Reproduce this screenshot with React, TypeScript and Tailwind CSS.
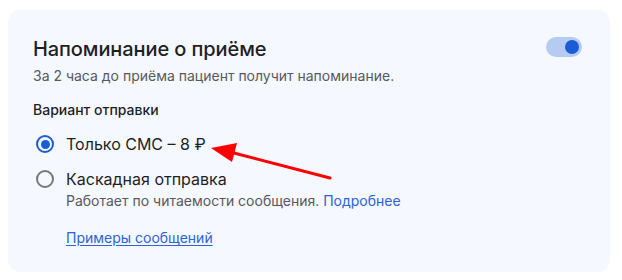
export default function App() {
  return (
    <div className="w-[622px] h-[280px] bg-white pt-[10px] pl-2" style={{ fontFamily: "Inter, 'Noto Sans', sans-serif" }}>
      <div className="relative w-[602px] h-[262px] rounded-xl bg-[#f5f8ff] pl-[25px] pr-7 pt-[25px]">
        <div className="flex items-start justify-between">
          <h2 className="text-[20px] leading-7 font-medium text-[#1f1f1f] tracking-[-0.1px]">Напоминание о приёме</h2>
          <button className="mt-[2px] w-9 h-5 rounded-full bg-[#b5cbf2] flex items-center justify-end pr-[3px]">
            <span className="w-[14px] h-[14px] rounded-full bg-[#1a5bd6]" />
          </button>
        </div>
        <p className="mt-[3px] text-[14px] leading-5 text-[#595959]">За 2 часа до приёма пациент получит напоминание.</p>
        <div className="mt-[14px] text-[14px] leading-5 font-medium text-[#1f1f1f]">Вариант отправки</div>
        <div className="mt-[12px] flex items-center gap-[12px]">
          <span className="ml-[3px] w-[18px] h-[18px] rounded-full border-2 border-[#1a5bd6] flex items-center justify-center">
            <span className="w-[9px] h-[9px] rounded-full bg-[#1a5bd6]" />
          </span>
          <span className="text-[16px] leading-6 text-[#1f1f1f]">Только СМС – 8 ₽</span>
        </div>
        <div className="mt-[11px] flex items-center gap-[12px]">
          <span className="ml-[3px] w-[18px] h-[18px] rounded-full border-2 border-[#777]" />
          <span className="text-[16px] leading-6 text-[#1f1f1f]">Каскадная отправка</span>
        </div>
        <p className="ml-[33px] mt-0 text-[14px] leading-5 text-[#595959]">
          Работает по читаемости сообщения. <a className="text-[#2a64d6]">Подробнее</a>
        </p>
        <a className="block ml-[33px] mt-[17px] text-[14px] leading-5 text-[#2a64d6] underline underline-offset-2">Примеры сообщений</a>
        <svg className="absolute left-0 top-0 pointer-events-none" width="602" height="262" viewBox="0 0 602 262">
          <line x1="322" y1="168" x2="222" y2="142" stroke="#ff0000" strokeWidth="3" strokeLinecap="round" />
          <polygon points="203,138 229,133 224,152" fill="#ff0000" />
        </svg>
      </div>
    </div>
  );
}
